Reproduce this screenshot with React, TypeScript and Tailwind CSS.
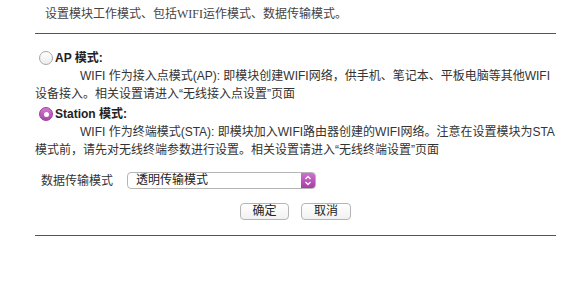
import { useState } from "react"

const sans = "font-['Liberation_Sans','Noto_Sans_CJK_SC',sans-serif]"

function Radio({ checked, onClick }: { checked: boolean; onClick: () => void }) {
  return (
    <button
      onClick={onClick}
      className={
        "w-[14px] h-[14px] rounded-full flex items-center justify-center shrink-0 " +
        (checked
          ? "bg-gradient-to-b from-[#d27ad2] to-[#a846a8] border border-[#9a3f9a]"
          : "bg-gradient-to-b from-white to-[#ececec] border border-[#a8a8a8]")
      }
    >
      {checked && <span className="w-[5px] h-[5px] rounded-full bg-white" />}
    </button>
  )
}

export default function App() {
  const [mode, setMode] = useState<"ap" | "sta">("sta")

  return (
    <div className={"w-[588px] h-[288px] bg-white text-[#333] text-[12px] " + sans}>
      <div className="ml-[35px] w-[521px]">
        <p className="pl-[10px] pt-[6px] h-[33px] leading-[16px] font-['Liberation_Serif','Noto_Sans_CJK_SC',serif] text-[#444]">
          设置模块工作模式、包括WIFI运作模式、数据传输模式。
        </p>
        <div className="h-px bg-[#555]" />

        {/* AP mode */}
        <div className="mt-[15px] leading-[18px]">
          <div className="flex items-center gap-[2px] pl-[4px]">
            <Radio checked={mode === "ap"} onClick={() => setMode("ap")} />
            <span className="font-bold text-[#222]">AP 模式:</span>
          </div>
          <p className="indent-[45px]">
            WIFI 作为接入点模式(AP): 即模块创建WIFI网络，供手机、笔记本、平板电脑等其他WIFI
            <br />
            设备接入。相关设置请进入“无线接入点设置”页面
          </p>
        </div>

        {/* Station mode */}
        <div className="mt-[2px] leading-[18px]">
          <div className="flex items-center gap-[2px] pl-[4px]">
            <Radio checked={mode === "sta"} onClick={() => setMode("sta")} />
            <span className="font-bold text-[#222]">Station 模式:</span>
          </div>
          <p className="indent-[45px]">
            WIFI 作为终端模式(STA): 即模块加入WIFI路由器创建的WIFI网络。注意在设置模块为STA
            <br />
            模式前，请先对无线终端参数进行设置。相关设置请进入“无线终端设置”页面
          </p>
        </div>

        {/* data mode */}
        <div className="mt-[13px] flex items-center h-[17px]">
          <span className="w-[92px] pl-[6px]">数据传输模式</span>
          <div className="w-[189px] h-[17px] flex rounded-[4px] border border-[#b5b5b5] overflow-hidden">
            <span className="flex-1 pl-[8px] leading-[15px] text-[#222]">透明传输模式</span>
            <span className="w-[14px] flex items-center justify-center bg-gradient-to-b from-[#cf6fcf] to-[#a53ea5]">
              <svg width="8" height="11" viewBox="0 0 8 11" fill="none" stroke="white" strokeWidth="1.3">
                <path d="M1.5 4 L4 1.5 L6.5 4" />
                <path d="M1.5 7 L4 9.5 L6.5 7" />
              </svg>
            </span>
          </div>
        </div>

        <div className="mt-[14px] flex gap-[12px] pl-[205px]">
          <button className="w-[49px] h-[17px] rounded-[4px] border border-[#b5b5b5] bg-gradient-to-b from-white to-[#f1f1f1] leading-[15px] text-[#222]">
            确定
          </button>
          <button className="w-[50px] h-[17px] rounded-[4px] border border-[#b5b5b5] bg-gradient-to-b from-white to-[#f1f1f1] leading-[15px] text-[#222]">
            取消
          </button>
        </div>

        <div className="mt-[15px] h-px bg-[#555]" />
      </div>
    </div>
  )
}
